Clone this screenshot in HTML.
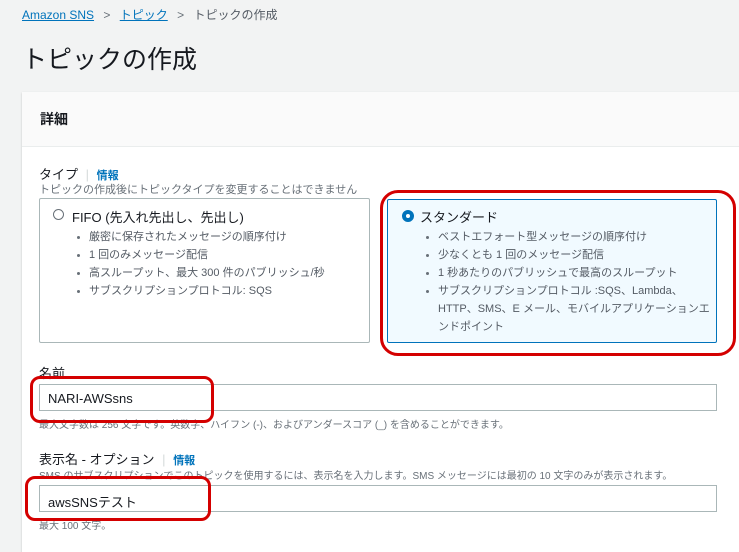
<!DOCTYPE html><html><head><meta charset="utf-8"><style>
*{box-sizing:border-box;margin:0;padding:0}
body{width:739px;height:544px;overflow:hidden;background:#f2f3f3;font-family:"Liberation Sans","Noto Sans CJK JP",sans-serif;color:#16191f;position:relative}
.a{position:absolute;white-space:nowrap}
.lnk{color:#0073bb;text-decoration:underline}
.g{color:#687078}
.box{position:absolute;border:1px solid #aab7b8;background:#fff;border-radius:2px}
ul{list-style:none}
li{position:relative;padding-left:14px;font-size:11px;color:#545b64;line-height:18px}
li:before{content:"";position:absolute;left:2px;top:8px;width:3px;height:3px;border-radius:50%;background:#687078}
.inp{position:absolute;left:39px;width:678px;height:27px;border:1px solid #aab7b8;background:#fff;font-size:13px;padding:6px 8px}
.red{position:absolute;border:3px solid #d40000;border-radius:10px}
</style></head><body>
<div class="a" style="left:22px;top:6px;font-size:12px"><span class="lnk">Amazon SNS</span> <span class="g" style="margin:0 6px">&gt;</span> <span class="lnk">トピック</span> <span class="g" style="margin:0 6px">&gt;</span> <span style="color:#545b64">トピックの作成</span></div>
<div class="a" style="left:22px;top:40px;font-size:25px;color:#16191f">トピックの作成</div>
<div style="position:absolute;left:22px;top:92px;width:730px;height:460px;background:#fff;box-shadow:0 1px 2px rgba(0,0,0,.2)">
<div style="height:55px;background:#fafafa;border-bottom:1px solid #eaeded"></div></div>
<div class="a" style="left:40px;top:109px;font-size:14px;font-weight:bold">詳細</div>
<div class="a" style="left:39px;top:164px;font-size:13px">タイプ <span style="color:#d5dbdb;margin:0 4px">|</span> <span style="color:#0073bb;font-size:11px;font-weight:bold">情報</span></div>
<div class="a g" style="left:39px;top:181px;font-size:11px">トピックの作成後にトピックタイプを変更することはできません</div>
<div class="box" style="left:39px;top:198px;width:331px;height:145px"></div>
<div class="a" style="left:53px;top:209px;width:11px;height:11px;border:1px solid #687078;border-radius:50%"></div>
<div class="a" style="left:72px;top:207px;font-size:13px">FIFO (先入れ先出し、先出し)</div>
<ul class="a" style="left:75px;top:228px"><li>厳密に保存されたメッセージの順序付け</li><li>1 回のみメッセージ配信</li><li>高スループット、最大 300 件のパブリッシュ/秒</li><li>サブスクリプションプロトコル: SQS</li></ul>
<div class="box" style="left:387px;top:199px;width:330px;height:144px;background:#f1faff;border-color:#0073bb"></div>
<div class="a" style="left:402px;top:210px;width:12px;height:12px;border:4px solid #0073bb;border-radius:50%;background:#fff"></div>
<div class="a" style="left:420px;top:207px;font-size:13px">スタンダード</div>
<ul class="a" style="left:424px;top:228px;white-space:normal;width:290px"><li>ベストエフォート型メッセージの順序付け</li><li>少なくとも 1 回のメッセージ配信</li><li>1 秒あたりのパブリッシュで最高のスループット</li><li>サブスクリプションプロトコル :SQS、Lambda、HTTP、SMS、E メール、モバイルアプリケーションエンドポイント</li></ul>
<div class="red" style="left:380px;top:190px;width:356px;height:166px;border-radius:18px"></div>
<div class="a" style="left:39px;top:363px;font-size:13px">名前</div>
<div class="inp" style="top:384px">NARI-AWSsns</div>
<div class="a g" style="left:39px;top:416px;font-size:10px">最大文字数は 256 文字です。英数字、ハイフン (-)、およびアンダースコア (_) を含めることができます。</div>
<div class="red" style="left:30px;top:376px;width:184px;height:47px"></div>
<div class="a" style="left:39px;top:449px;font-size:13px">表示名 - オプション <span style="color:#d5dbdb;margin:0 4px">|</span> <span style="color:#0073bb;font-size:11px;font-weight:bold">情報</span></div>
<div class="a g" style="left:39px;top:467px;font-size:10px">SMS のサブスクリプションでこのトピックを使用するには、表示名を入力します。SMS メッセージには最初の 10 文字のみが表示されます。</div>
<div class="inp" style="top:485px">awsSNSテスト</div>
<div class="a g" style="left:39px;top:517px;font-size:10px">最大 100 文字。</div>
<div class="red" style="left:25px;top:476px;width:186px;height:45px"></div>
</body></html>
